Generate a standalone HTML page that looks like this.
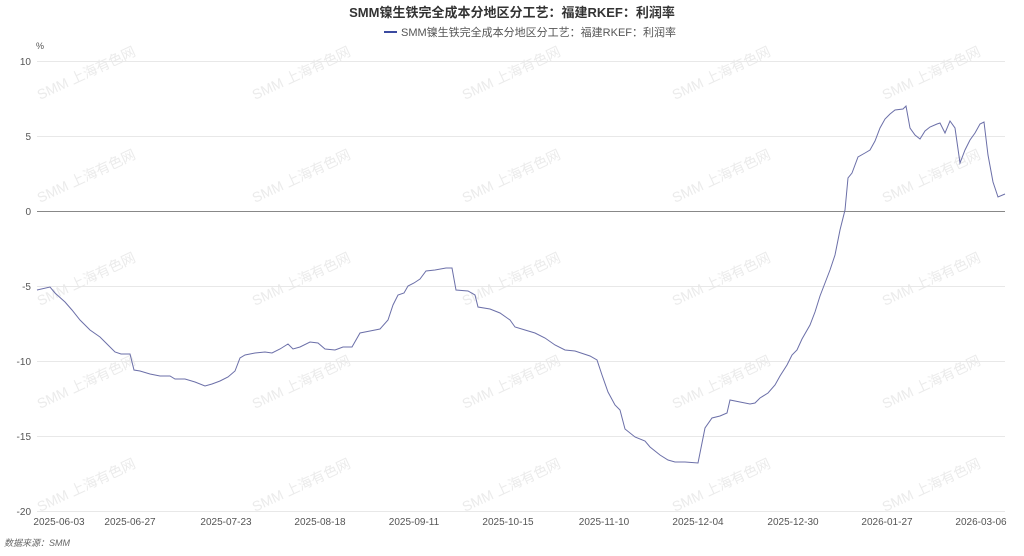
<!DOCTYPE html>
<html><head><meta charset="utf-8"><style>
body{margin:0;background:#fff;width:1024px;height:551px;overflow:hidden;font-family:"Liberation Sans","Noto Sans CJK SC",sans-serif}
svg text{font-family:"Liberation Sans","Noto Sans CJK SC",sans-serif}
</style></head><body>
<svg width="1024" height="551" viewBox="0 0 1024 551">
<g font-size="14" fill="#ebebeb" transform="">
<g id="wm">
<text x="40" y="100" transform="rotate(-25 40 100)">SMM 上海有色网</text>
<text x="255" y="100" transform="rotate(-25 255 100)">SMM 上海有色网</text>
<text x="465" y="100" transform="rotate(-25 465 100)">SMM 上海有色网</text>
<text x="675" y="100" transform="rotate(-25 675 100)">SMM 上海有色网</text>
<text x="885" y="100" transform="rotate(-25 885 100)">SMM 上海有色网</text>
</g>
<use href="#wm" y="103"/><use href="#wm" y="206"/><use href="#wm" y="309"/><use href="#wm" y="412"/>
</g>
<text x="512" y="17" text-anchor="middle" font-size="13" font-weight="bold" fill="#333">SMM镍生铁完全成本分地区分工艺：福建RKEF：利润率</text>
<line x1="384" y1="32" x2="397" y2="32" stroke="#3b4aa0" stroke-width="2"/>
<text x="401" y="36" font-size="11" fill="#555">SMM镍生铁完全成本分地区分工艺：福建RKEF：利润率</text>
<text x="36" y="49" font-size="9" fill="#555">%</text>
<g stroke="#e8e8e8" stroke-width="1">
<line x1="37" y1="61.5" x2="1005" y2="61.5"/><line x1="37" y1="136.5" x2="1005" y2="136.5"/>
<line x1="37" y1="286.5" x2="1005" y2="286.5"/><line x1="37" y1="361.5" x2="1005" y2="361.5"/>
<line x1="37" y1="436.5" x2="1005" y2="436.5"/><line x1="37" y1="511.5" x2="1005" y2="511.5"/>
</g>
<line x1="37" y1="211.5" x2="1005" y2="211.5" stroke="#888"/>
<g font-size="10" fill="#555" text-anchor="end">
<text x="31" y="65">10</text><text x="31" y="140">5</text><text x="31" y="215">0</text>
<text x="31" y="290">-5</text><text x="31" y="365">-10</text><text x="31" y="440">-15</text><text x="31" y="515">-20</text>
</g>
<g font-size="10" fill="#555" text-anchor="middle">
<text x="59" y="525">2025-06-03</text><text x="130" y="525">2025-06-27</text><text x="226" y="525">2025-07-23</text>
<text x="320" y="525">2025-08-18</text><text x="414" y="525">2025-09-11</text><text x="508" y="525">2025-10-15</text>
<text x="604" y="525">2025-11-10</text><text x="698" y="525">2025-12-04</text><text x="793" y="525">2025-12-30</text>
<text x="887" y="525">2026-01-27</text><text x="981" y="525">2026-03-06</text>
</g>
<text x="4" y="546" font-size="9" font-style="italic" fill="#666">数据来源：SMM</text>
<polyline fill="none" stroke="#6b6fa8" stroke-width="1" points="37,290 50,287 55,293 65,302 72,310 80,320 90,330 100,337 108,345 115,352 121,354 130,354 134,370 140,371 150,374 160,376 170,376 175,379 185,379 195,382 205,386 212,384 220,381 228,377 235,371 240,358 245,355 255,353 265,352 272,353 280,349 288,344 293,349 300,347 310,342 318,343 325,349 335,350 343,347 352,347 360,333 370,331 380,329 388,320 393,305 398,295 404,293 408,286 414,283 420,279 426,271 435,270 446,268 452,268 456,290 468,291 475,295 478,307 490,309 500,313 510,320 515,327 525,330 535,333 545,338 555,345 565,350 575,351 590,356 597,360 602,375 608,392 615,405 620,410 625,429 635,437 645,441 650,447 660,455 668,460 675,462 685,462 698,463 705,428 712,418 720,416 727,413 730,400 740,402 750,404 755,403 760,398 768,393 775,385 780,376 787,365 792,355 797,350 802,339 810,325 815,312 820,296 825,283 830,270 835,255 840,230 845,210 848,178 852,173 858,157 865,153 870,150 875,141 880,128 885,119 890,114 895,110 903,109 906,106 910,128 915,135 920,139 925,131 930,127 937,124 940,123 945,133 950,121 955,128 960,163 965,150 970,140 975,133 980,124 984,122 988,155 993,182 998,197 1005,194"/>
</svg>
</body></html>
